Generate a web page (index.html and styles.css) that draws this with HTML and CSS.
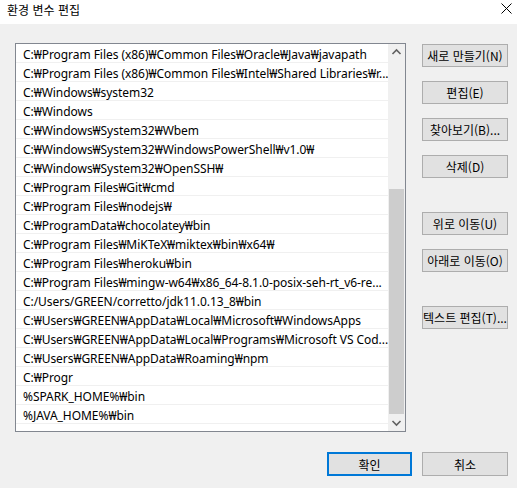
FILE: index.html
```html
<!DOCTYPE html>
<html lang="ko">
<head>
    <meta charset="UTF-8">
    <meta name="viewport" content="width=device-width, initial-scale=1.0">
    <title>환경 변수 편집</title>
    <link rel="stylesheet" href="styles.css">
</head>
<body>
    <div class="dialog">
        <div class="titlebar">
            <span class="title">환경 변수 편집</span>
            <svg class="close" width="11" height="11" viewBox="0 0 11 11">
                <path d="M0.5 0.5 L10.5 10.5 M10.5 0.5 L0.5 10.5" stroke="#000" stroke-width="1" fill="none"/>
            </svg>
        </div>

        <div class="content">
            <div class="listbox">
                <ul class="paths">
                    <li>C:₩Program Files (x86)₩Common Files₩Oracle₩Java₩javapath</li>
                    <li>C:₩Program Files (x86)₩Common Files₩Intel₩Shared Libraries₩r...</li>
                    <li>C:₩Windows₩system32</li>
                    <li>C:₩Windows</li>
                    <li>C:₩Windows₩System32₩Wbem</li>
                    <li>C:₩Windows₩System32₩WindowsPowerShell₩v1.0₩</li>
                    <li>C:₩Windows₩System32₩OpenSSH₩</li>
                    <li>C:₩Program Files₩Git₩cmd</li>
                    <li>C:₩Program Files₩nodejs₩</li>
                    <li>C:₩ProgramData₩chocolatey₩bin</li>
                    <li>C:₩Program Files₩MiKTeX₩miktex₩bin₩x64₩</li>
                    <li>C:₩Program Files₩heroku₩bin</li>
                    <li>C:₩Program Files₩mingw-w64₩x86_64-8.1.0-posix-seh-rt_v6-re...</li>
                    <li>C:/Users/GREEN/corretto/jdk11.0.13_8₩bin</li>
                    <li>C:₩Users₩GREEN₩AppData₩Local₩Microsoft₩WindowsApps</li>
                    <li>C:₩Users₩GREEN₩AppData₩Local₩Programs₩Microsoft VS Cod...</li>
                    <li>C:₩Users₩GREEN₩AppData₩Roaming₩npm</li>
                    <li>C:₩Progr</li>
                    <li>%SPARK_HOME%₩bin</li>
                    <li>%JAVA_HOME%₩bin</li>
                </ul>
                <div class="scrollbar">
                    <svg class="arrow" width="17" height="17" viewBox="0 0 17 17">
                        <path d="M4.5 10 L8.5 6 L12.5 10" stroke="#606060" stroke-width="1.6" fill="none"/>
                    </svg>
                    <div class="track">
                        <div class="thumb"></div>
                    </div>
                    <svg class="arrow" width="17" height="17" viewBox="0 0 17 17">
                        <path d="M4.5 7 L8.5 11 L12.5 7" stroke="#606060" stroke-width="1.6" fill="none"/>
                    </svg>
                </div>
            </div>

            <div class="side-buttons">
                <button class="btn">새로 만들기(N)</button>
                <button class="btn">편집(E)</button>
                <button class="btn">찾아보기(B)...</button>
                <button class="btn">삭제(D)</button>
                <button class="btn group">위로 이동(U)</button>
                <button class="btn">아래로 이동(O)</button>
                <button class="btn group">텍스트 편집(T)...</button>
            </div>
        </div>

        <div class="footer">
            <button class="btn default">확인</button>
            <button class="btn">취소</button>
        </div>
    </div>
</body>
</html>
```

FILE: styles.css
```css
body {
    margin: 0;
    font-family: "Noto Sans", "Noto Sans CJK KR", sans-serif;
    font-size: 12px;
    color: #000;
    background-color: #f0f0f0;
}

.dialog {
    width: 517px;
    height: 488px;
    display: flex;
    flex-direction: column;
}

.titlebar {
    height: 24px;
    background-color: #fff;
    display: flex;
    align-items: center;
    justify-content: space-between;
    padding: 0 5px 0 7px;
}

.title {
    font-family: "Noto Sans CJK KR", sans-serif;
    font-size: 12px;
    margin-top: -6px;
}

.close {
    margin-top: -7px;
}

.content {
    display: flex;
    padding: 19px 0 0 15px;
}

.listbox {
    width: 389px;
    height: 387px;
    border: 1px solid #828790;
    background-color: #fff;
    display: flex;
}

.paths {
    list-style: none;
    margin: 0;
    padding: 0;
    flex: 1;
    min-width: 0;
}

.paths li {
    height: 16px;
    padding: 2px 0 0 7px;
    line-height: 18px;
    letter-spacing: -0.05px;
    border-bottom: 1px solid #f0f0f0;
    white-space: nowrap;
}

.scrollbar {
    width: 17px;
    background-color: #f0f0f0;
    display: flex;
    flex-direction: column;
}

.arrow {
    display: block;
}

.track {
    flex: 1;
    display: flex;
    flex-direction: column;
    justify-content: flex-end;
    padding: 0 1px;
}

.thumb {
    height: 225px;
    background-color: #cdcdcd;
}

.side-buttons {
    display: flex;
    flex-direction: column;
    gap: 14px;
    margin-left: 16px;
    padding-top: 1px;
}

.btn {
    width: 86px;
    height: 23px;
    padding: 0;
    font-family: "Noto Sans CJK KR", sans-serif;
    font-size: 12px;
    color: #000;
    background-color: #e1e1e1;
    border: 1px solid #adadad;
    white-space: nowrap;
}

.btn.group {
    margin-top: 20px;
}

.footer {
    display: flex;
    justify-content: flex-end;
    gap: 10px;
    padding: 20px 9px 0 0;
}

.footer .btn {
    height: 24px;
}

.btn.default {
    width: 85px;
    border: 2px solid #0078d7;
}
```
